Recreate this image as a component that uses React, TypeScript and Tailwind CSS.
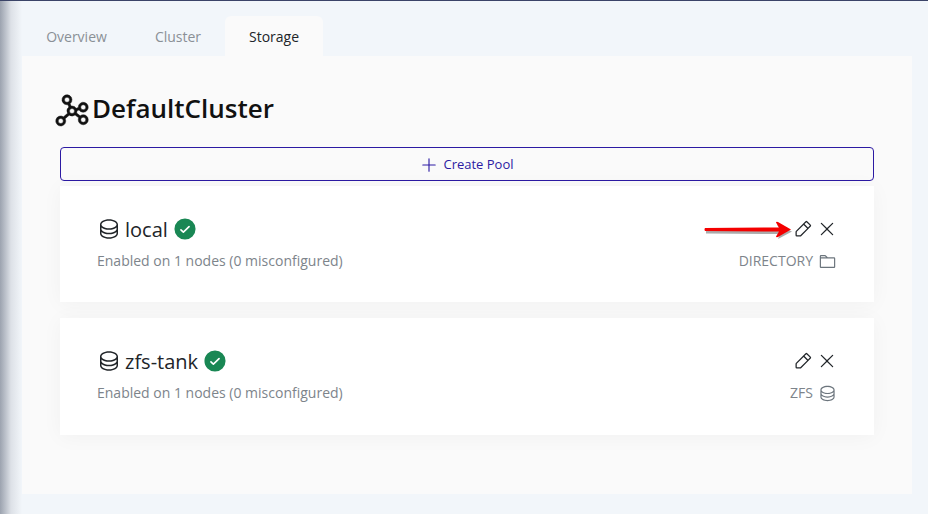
import { PiCheckCircleFill, PiDatabase, PiFolder, PiGraph, PiPencilSimple, PiPlus, PiX } from "react-icons/pi";

function Arrow() {
  return (
    <svg className="absolute left-[-92px] top-[1px]" width="94" height="26" viewBox="0 0 94 26" fill="none">
      <path d="M4 12.5 L78 12 L75 6.5 L90 13.5 L76 21 L78 16 L4 15.5 Z" fill="#444" fillOpacity="0.45" transform="translate(1 1)" />
      <path d="M4 11 L78 10.5 L75 5.5 Q75 4.5 77 5 L90 12.5 L77 20 Q75 20.5 75 19.5 L78 14.5 L4 14 Q3 12.5 4 11 Z" fill="#f40000" />
    </svg>
  );
}

function PoolCard({ name, kind, icon, arrow, h }: { name: string; kind: string; icon: React.ReactNode; arrow?: boolean; h: string }) {
  return (
    <div className={`flex justify-between bg-white pl-[37px] pr-[37px] pt-[30px] shadow-[0_2px_20px_rgba(0,0,0,0.04)] ${h}`}>
      <div>
        <div className="flex h-[26px] items-center">
          <PiDatabase className="mr-[4px] text-[24px] text-[#212529]" />
          <span className="pt-[1px] text-[20px] leading-[26px] text-[#212529]">{name}</span>
          <PiCheckCircleFill className="ml-[4px] text-[26px] text-[#198754]" />
        </div>
        <div className="mt-[9px] text-[14px] leading-[20px] text-[#7d848b]">Enabled on 1 nodes (0 misconfigured)</div>
      </div>
      <div className="flex flex-col items-end">
        <div className="relative flex h-[26px] items-center gap-[4px]">
          {arrow && <Arrow />}
          <PiPencilSimple className="text-[20px] text-[#212529]" />
          <PiX className="text-[20px] text-[#212529]" />
        </div>
        <div className="mt-[9px] flex h-[20px] items-center gap-[5px] text-[14px] leading-[20px] text-[#7d848b]">
          <span>{kind}</span>
          {icon}
        </div>
      </div>
    </div>
  );
}

export default function App() {
  return (
    <div className="relative h-[514px] w-[928px] overflow-hidden border-t border-[#3b4468] bg-[#f2f6fa] font-['Open_Sans',sans-serif]">
      <div className="absolute inset-y-0 left-0 w-[22px] bg-gradient-to-r from-[#9ca3af] via-[#dde1e7] to-transparent" />
      <div className="pl-[22px] pr-[16px] pt-[15px]">
        <div className="flex h-[40px] text-[14px] leading-[42px]">
          <div className="w-[109px] text-center text-[#8a9096]">Overview</div>
          <div className="w-[94px] text-center text-[#8a9096]">Cluster</div>
          <div className="w-[98px] rounded-t-[6px] bg-[#fafafa] text-center text-[#212529]">Storage</div>
        </div>
        <div className="h-[438px] bg-[#fafafa] pl-[38px] pr-[38px] pt-[35px]">
          <div className="flex h-[36px] items-center">
            <PiGraph className="ml-[-8px] mt-[4px] shrink-0 text-[40px] text-[#111] [stroke-width:3]" />
            <h1 className="mt-[-2px] text-[26px] font-semibold leading-[36px] text-[#111]">DefaultCluster</h1>
          </div>
          <button className="mt-[20px] flex h-[34px] w-full items-center justify-center gap-[5px] rounded-[4px] border border-[#2c1aa3] pt-[1px] text-[13px] text-[#2c1aa3]">
            <PiPlus className="text-[18px]" />
            Create Pool
          </button>
          <div className="mt-[5px] flex flex-col gap-[16px]">
            <PoolCard name="local" kind="DIRECTORY" arrow h="h-[116px]" icon={<PiFolder className="text-[19px] text-[#6c757d]" />} />
            <PoolCard name="zfs-tank" kind="ZFS" h="h-[117px]" icon={<PiDatabase className="text-[19px] text-[#6c757d]" />} />
          </div>
        </div>
      </div>
    </div>
  );
}
